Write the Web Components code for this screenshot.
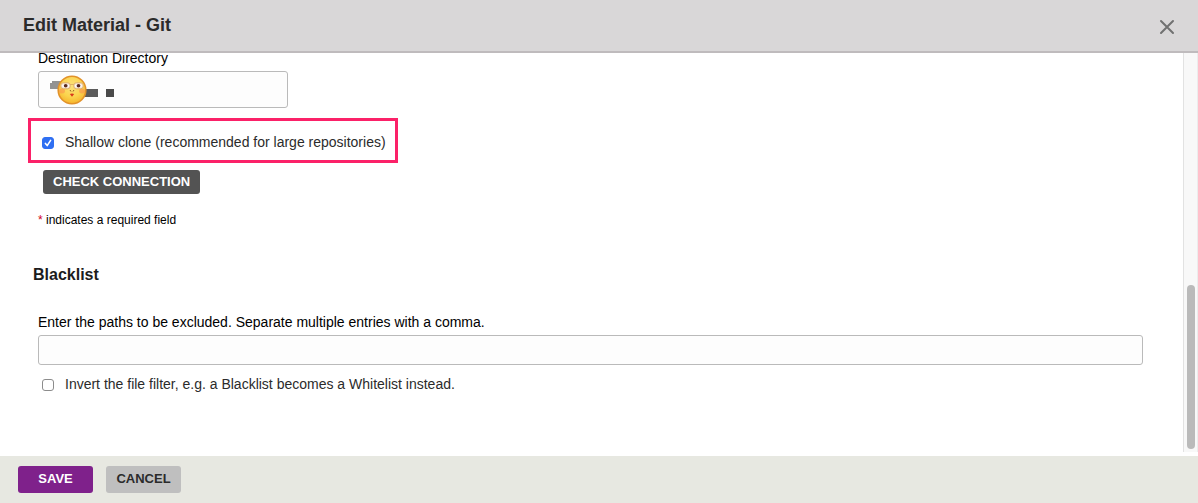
<!DOCTYPE html>
<html lang="en">
<head>
<meta charset="utf-8">
<title>Edit Material - Git</title>
<style>
  body { margin: 0; font-family: "Liberation Sans", Arial, sans-serif; font-size: 14px; color: #000; background: #fff; }
  .form { display: flex; flex-direction: column; align-items: flex-start; }
  .full { align-self: stretch; }
  .dest { width: 250px; }
  .marked { border: 3px solid #fb2168; margin: 10px 0 7px -10px; padding: 13px 9px 10px 11px; }
  .check { margin-left: 5px; }
  .invert { margin: 11px 0 0 4px; }
</style>
</head>
<body>
<modal-dialog heading="Edit Material - Git">
  <div class="form">
    <text-field class="dest" label="Destination Directory" size="large"><masked-value></masked-value></text-field>
    <check-field class="marked" label="Shallow clone (recommended for large repositories)" checked></check-field>
    <action-button class="check" kind="dark">CHECK CONNECTION</action-button>
    <required-note></required-note>
    <section-heading>Blacklist</section-heading>
    <text-field class="full" label="Enter the paths to be excluded. Separate multiple entries with a comma."></text-field>
    <check-field class="invert" label="Invert the file filter, e.g. a Blacklist becomes a Whitelist instead."></check-field>
  </div>
  <action-button slot="footer" kind="primary">SAVE</action-button>
  <action-button slot="footer" kind="plain">CANCEL</action-button>
</modal-dialog>

<script>
class BaseElement extends HTMLElement {
  connectedCallback() {
    if (this.shadowRoot) return;
    this.attachShadow({ mode: "open" }).innerHTML =
      "<style>*{box-sizing:border-box}:host{box-sizing:border-box}</style>" + this.template();
    this.ready();
  }
  template() { return ""; }
  ready() {}
}

customElements.define("modal-dialog", class extends BaseElement {
  template() {
    return `<style>
      :host { display: flex; flex-direction: column; height: 100vh; }
      header { display: flex; align-items: center; justify-content: space-between; height: 53px; flex: none;
        padding: 0 23px; background: #d9d7d8; border-bottom: 2px solid #bfbbbd; }
      h1 { margin: 0; font-size: 18px; line-height: 20px; padding-bottom: 2px; color: #2b2b2b; }
      .close { border: 0; background: none; padding: 0; width: 16px; height: 16px; margin-top: 2px; }
      svg { display: block; }
      main { flex: 1; min-height: 0; display: flex; overflow: hidden; }
      .content { flex: 1; min-width: 0; padding: 0 40px 0 38px; }
      footer { flex: none; display: flex; gap: 13px; height: 47px; padding: 10px 18px; background: #e7e8e1; }
    </style>
    <header><h1></h1>
      <button class="close" aria-label="Close"><svg width="16" height="16" viewBox="0 0 16 16"><path d="M2 2L14 14M14 2L2 14" stroke="#717171" stroke-width="2" stroke-linecap="round"/></svg></button>
    </header>
    <main><div class="content"><slot></slot></div><scroll-rail></scroll-rail></main>
    <footer><slot name="footer"></slot></footer>`;
  }
  ready() { this.shadowRoot.querySelector("h1").textContent = this.getAttribute("heading"); }
});

customElements.define("scroll-rail", class extends BaseElement {
  template() {
    return `<style>
      :host { display: grid; grid-template-rows: 232fr 164fr 3px; width: 15px; margin-bottom: 4px;
        padding: 0 3px; background: #f8f8f8; border-left: 1px solid #e2e2e2; border-right: 1px solid #ececec; }
      div { grid-row: 2; width: 8px; border-radius: 4px; background: #bababa; }
    </style><div></div>`;
  }
});

customElements.define("text-field", class extends BaseElement {
  template() {
    return `<style>
      :host { display: flex; flex-direction: column; gap: 8px; }
      label { line-height: 10px; }
      .box { display: grid; }
      input { grid-area: 1 / 1; width: 100%; height: 30px; border: 1px solid #bababa; border-radius: 3px;
        background: #fdfdfd; font: inherit; padding: 0 10px; outline: 0; }
      :host([size=large]) input { height: 37px; }
      slot { display: block; grid-area: 1 / 1; pointer-events: none; z-index: 1; }
    </style>
    <label for="field"></label>
    <div class="box"><input id="field" type="text"><slot></slot></div>`;
  }
  ready() { this.shadowRoot.querySelector("label").textContent = this.getAttribute("label"); }
});

customElements.define("masked-value", class extends BaseElement {
  template() {
    return `<style>
      :host { display: block; padding: 4px 0 0 12px; }
      svg { display: block; }
    </style>
    <svg width="66" height="30" viewBox="0 0 66 30" aria-hidden="true">
      <defs><radialGradient id="face" cx=".5" cy=".35" r=".65">
        <stop offset="0" stop-color="#fbe27c"/><stop offset=".6" stop-color="#fbd44e"/><stop offset="1" stop-color="#f6b42c"/>
      </radialGradient></defs>
      <path d="M0 8H2V6H12V14H0Z" fill="#929292"/>
      <path d="M33 14H48V22H33Z" fill="#5b5b5b"/>
      <path d="M56 14H64V22H56Z" fill="#4a4a4a"/>
      <circle cx="22" cy="15" r="13.800" fill="url(#face)" stroke="#e2922a" stroke-width="1.600"/>
      <ellipse cx="12" cy="16" rx="3" ry="2.500" fill="#fb9350" opacity=".6"/>
      <ellipse cx="32" cy="16" rx="3" ry="2.500" fill="#fb9350" opacity=".6"/>
      <rect x="10.800" y="7.800" width="9.400" height="6" rx="2.500" fill="#f6e3cf" stroke="#d9a45e" stroke-width=".8"/>
      <rect x="23.800" y="7.800" width="9.400" height="6" rx="2.500" fill="#f6e3cf" stroke="#d9a45e" stroke-width=".8"/>
      <path d="M20.200 9.500H23.800" stroke="#d9a45e" stroke-width=".8"/>
      <ellipse cx="15.600" cy="10.700" rx="3.500" ry="1.800" fill="#fff"/>
      <ellipse cx="28.400" cy="10.700" rx="3.500" ry="1.800" fill="#fff"/>
      <ellipse cx="15.700" cy="10.700" rx="1.900" ry="1.700" fill="#5a2b20"/>
      <ellipse cx="28.500" cy="10.700" rx="1.900" ry="1.700" fill="#5a2b20"/>
      <path d="M20 15L21 16.500M24 15L23 16.500" stroke="#8a5218" stroke-width=".9"/>
      <path d="M19.800 19L22 18.400L24.200 19L22 21.800Z" fill="#d93a1c"/>
    </svg>`;
  }
});

customElements.define("check-field", class extends BaseElement {
  template() {
    return `<style>
      :host { display: block; }
      label { display: flex; align-items: center; gap: 11px; line-height: 16px; color: #2b2b2b; }
      input { appearance: none; flex: none; width: 12px; height: 12px; margin: 2px 0 0; border: 1px solid #8c8c8c;
        border-radius: 3px; background: #fff; display: grid; }
      input:checked { border-color: #2f6ff2; 
        background: #2f6ff2 url("data:image/svg+xml,%3Csvg xmlns='http://www.w3.org/2000/svg' viewBox='0 0 12 12'%3E%3Cpath d='M3.400 6.400L5.200 8.600L8.600 3.400' fill='none' stroke='white' stroke-width='1.600' stroke-linecap='round' stroke-linejoin='round'/%3E%3C/svg%3E") center / 12px 12px no-repeat; }
    </style>
    <label><input type="checkbox"><span></span></label>`;
  }
  ready() {
    this.shadowRoot.querySelector("span").textContent = this.getAttribute("label");
    this.shadowRoot.querySelector("input").checked = this.hasAttribute("checked");
  }
});

customElements.define("action-button", class extends BaseElement {
  template() {
    return `<style>
      :host { display: block; }
      button { display: block; min-width: 75px; height: 27px; padding: 0 10px 2px; border: 0; border-radius: 3px;
        font: bold 13px/16px "Liberation Sans", Arial, sans-serif; background: #bfbfbf; color: #2b2b2b; }
      :host([kind=primary]) button { background: #7f218b; color: #fff; }
      :host([kind=dark]) button { height: 24px; padding-bottom: 0; background: #535353; color: #fff; }
    </style><button type="button"><slot></slot></button>`;
  }
});

customElements.define("required-note", class extends BaseElement {
  template() {
    return `<style>
      :host { display: block; margin-top: 18px; font-size: 12px; line-height: 16px; }
      span { color: #d0021b; }
    </style><span>*</span> indicates a required field`;
  }
});

customElements.define("section-heading", class extends BaseElement {
  template() {
    return `<style>
      :host { display: block; margin: 37px 0 32px -5px; }
      h2 { margin: 0; font-size: 16px; line-height: 20px; color: #1c1c1c; }
    </style><h2><slot></slot></h2>`;
  }
});
</script>
</body>
</html>
